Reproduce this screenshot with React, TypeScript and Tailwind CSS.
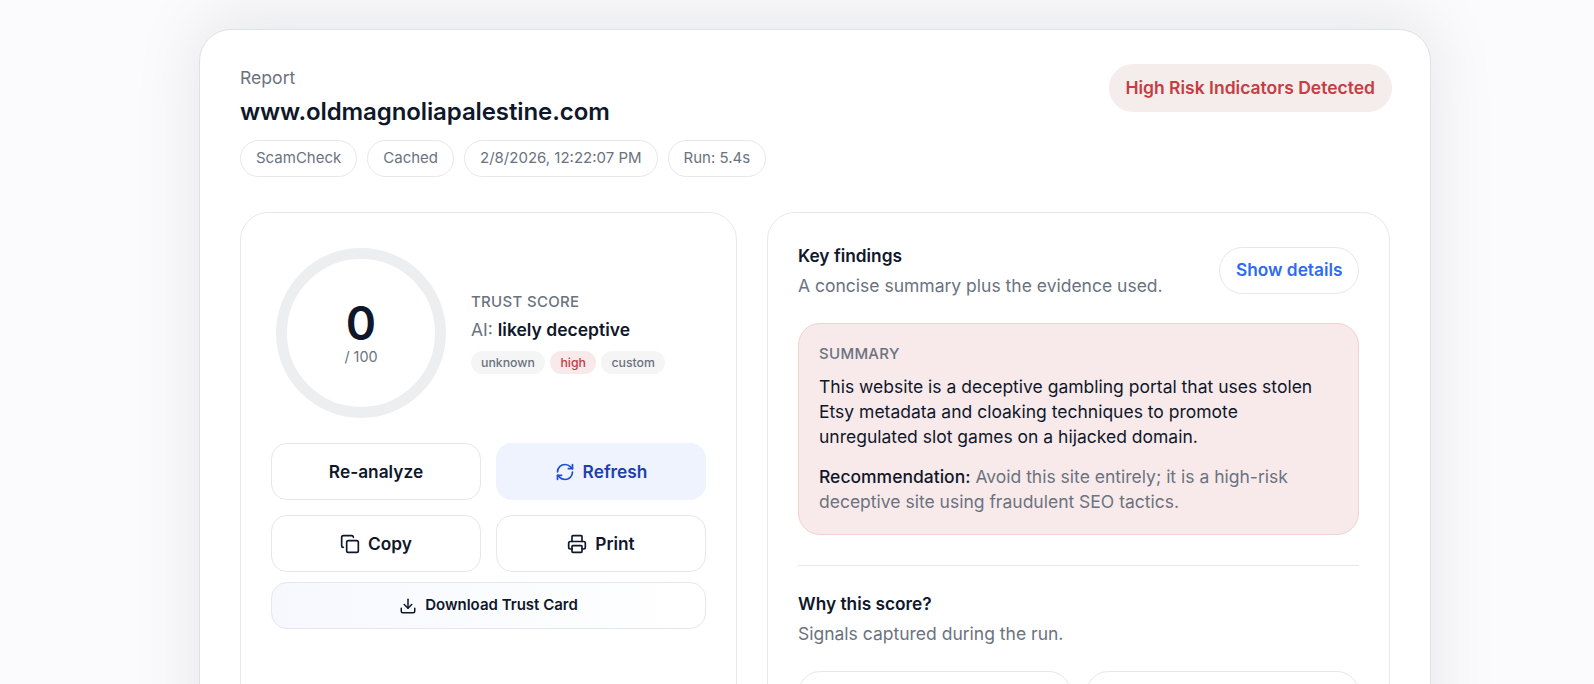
import { Copy, Download, Printer, RefreshCw } from "lucide-react";

const metaPills = ["ScamCheck", "Cached", "2/8/2026, 12:22:07 PM", "Run: 5.4s"];

export default function App() {
  return (
    <div className="h-screen overflow-hidden bg-[#fbfbfd] pt-[29px] pl-[199px] font-['Inter',sans-serif] text-[#0f172a]">
      <div className="w-[1232px] rounded-[32px] border border-[#e0e1e5] bg-white px-10 pt-[33px] pb-10 shadow-[0_-10px_70px_rgba(15,23,42,0.09)]">
        {/* Header */}
        <div className="flex items-start justify-between">
          <div>
            <div className="text-[17.6px] leading-[30px] text-[#6b7280]">Report</div>
            <h1 className="text-2xl leading-[37px] font-semibold tracking-[-0.004em]">www.oldmagnoliapalestine.com</h1>
            <div className="mt-[10px] flex gap-[10px]">
              {metaPills.map((pill) => (
                <span key={pill} className="flex h-[37px] items-center rounded-full border border-[#e5e7eb] px-[15px] text-[15px] text-[#6b7280]">
                  {pill}
                </span>
              ))}
            </div>
          </div>
          <div className="mt-[1px] -mr-[2px] flex h-[48px] items-center rounded-full bg-[#f5ecec] pr-[17px] pl-4 text-[17.5px] font-semibold text-[#c53d43]">
            High Risk Indicators Detected
          </div>
        </div>

        <div className="mt-[35px] grid grid-cols-[497px_1fr] gap-[30px]">
          {/* Score */}
          <div className="rounded-[28px] border border-[#e5e7eb] p-[30px]">
            <div className="flex items-center gap-5">
              <div className="relative h-[180px] w-[180px] shrink-0">
                <svg viewBox="0 0 180 180" className="h-full w-full">
                  <circle cx="90" cy="90" r="79.5" fill="none" stroke="#eceef0" strokeWidth="11" />
                </svg>
                <div className="absolute inset-0 flex flex-col items-center justify-center">
                  <div className="text-[46px] leading-[46px] font-semibold">0</div>
                  <div className="mt-px text-[14.4px] leading-[20px] text-[#6b7280]">/ 100</div>
                </div>
              </div>
              <div>
                <div className="text-[15px] leading-[20px] font-medium tracking-[0.02em] text-[#6b7280]">TRUST SCORE</div>
                <div className="mt-[5px] text-[17.5px] leading-[26px] text-[#6b7280]">
                  AI: <span className="font-semibold text-[#0f172a]">likely deceptive</span>
                </div>
                <div className="mt-2 flex gap-[5px] text-[12.3px] leading-[15px] font-medium">
                  <span className="rounded-full bg-[#f5f5f6] px-[10px] py-1 text-[#6b7280]">unknown</span>
                  <span className="rounded-full bg-[#f8eaea] px-[10.5px] py-1 text-[#c53d43]">high</span>
                  <span className="rounded-full bg-[#f5f5f6] px-[10px] py-1 text-[#6b7280]">custom</span>
                </div>
              </div>
            </div>

            <div className="mt-5 grid grid-cols-2 gap-[15px]">
              <button className="flex h-[57px] items-center justify-center rounded-2xl border border-[#e5e7eb] text-[17.3px] font-semibold">Re-analyze</button>
              <button className="flex h-[57px] items-center justify-center gap-2 rounded-2xl bg-[#eff3fd] text-[17.3px] font-semibold text-[#1e40af]">
                <RefreshCw size={20} strokeWidth={2} className="text-[#1d4ed8]" />
                Refresh
              </button>
              <button className="flex h-[57px] items-center justify-center gap-2 rounded-2xl border border-[#e5e7eb] text-[17.3px] font-semibold">
                <Copy size={20} strokeWidth={2} />
                Copy
              </button>
              <button className="flex h-[57px] items-center justify-center gap-2 rounded-2xl border border-[#e5e7eb] text-[17.3px] font-semibold">
                <Printer size={20} strokeWidth={2} />
                Print
              </button>
            </div>
            <button className="mt-[10px] flex h-[47px] w-full items-center justify-center gap-2 rounded-2xl border border-[#e5e7eb] bg-gradient-to-r from-[#f6f8fe] to-white text-[15px] font-semibold">
              <Download size={18} strokeWidth={2} />
              Download Trust Card
            </button>
          </div>

          {/* Findings */}
          <div className="rounded-[28px] border border-[#e5e7eb] p-[30px]">
            <div className="flex items-center justify-between">
              <div>
                <div className="text-[17.3px] leading-[26px] font-semibold">Key findings</div>
                <div className="mt-1 text-[17.5px] leading-[26px] text-[#6b7280]">A concise summary plus the evidence used.</div>
              </div>
              <button className="-mt-[2px] flex h-[47px] items-center rounded-full border border-[#e5e7eb] px-[15.5px] text-[17.3px] font-semibold text-[#2f6bf0]">
                Show details
              </button>
            </div>

            <div className="mt-6 rounded-[22px] border border-[#f0d2d2] bg-[#f8eaea] px-5 pt-5 pb-5">
              <div className="text-[15px] leading-[20px] font-medium tracking-[0.02em] text-[#6b7280]">SUMMARY</div>
              <p className="mt-[10px] text-[17.5px] leading-[25px]">
                This website is a deceptive gambling portal that uses stolen Etsy metadata and cloaking techniques to promote unregulated slot games on a hijacked domain.
              </p>
              <p className="mt-[15px] text-[17.5px] leading-[25px] text-[#6b7280]">
                <span className="font-medium text-[#0f172a]">Recommendation:</span> Avoid this site entirely; it is a high-risk deceptive site using fraudulent SEO tactics.
              </p>
            </div>

            <div className="mt-[30px] mb-[25px] h-px bg-[#e5e7eb]" />

            <div className="text-[17.3px] leading-[26px] font-semibold">Why this score?</div>
            <div className="mt-1 text-[17.5px] leading-[26px] text-[#6b7280]">Signals captured during the run.</div>

            <div className="mt-6 grid grid-cols-2 gap-[15px]">
              <div className="h-24 rounded-[22px] border border-[#e5e7eb]" />
              <div className="h-24 rounded-[22px] border border-[#e5e7eb]" />
            </div>
          </div>
        </div>
      </div>
    </div>
  );
}
